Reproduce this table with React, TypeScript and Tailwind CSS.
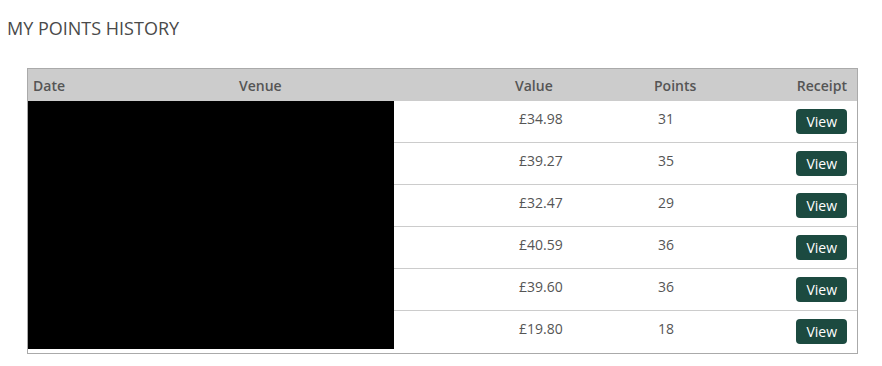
import React from 'react';

const rows = [
  { value: '£34.98', points: 31 },
  { value: '£39.27', points: 35 },
  { value: '£32.47', points: 29 },
  { value: '£40.59', points: 36 },
  { value: '£39.60', points: 36 },
  { value: '£19.80', points: 18 },
];

export default function App() {
  return (
    <div className="min-h-[366px] w-[882px] bg-white font-['Open_Sans',sans-serif] text-[#555]">
      <h1 className="pl-[7px] pt-[16px] text-[18px] leading-[24px] font-normal text-[#4a4a4a]">MY POINTS HISTORY</h1>

      <div className="relative ml-[27px] mt-[28px] w-[831px] border border-[#aaa]">
        {/* header */}
        <div className="grid h-[32px] grid-cols-[211px_276px_139px_1fr_auto] items-center bg-[#ccc] text-[14px] font-semibold text-[#555]">
          <div className="pl-[5px]">Date</div>
          <div>Venue</div>
          <div>Value</div>
          <div>Points</div>
          <div className="pr-[10px]">Receipt</div>
        </div>

        {rows.map((r, i) => (
          <div
            key={i}
            className={
              'grid h-[42px] grid-cols-[211px_276px_143px_1fr_auto] items-start text-[14px] ' +
              (i < rows.length - 1 ? 'border-b border-[#ccc]' : '')
            }
          >
            <div />
            <div />
            <div className="pl-[4px] pt-[7px] leading-[21px]">{r.value}</div>
            <div className="pt-[7px] leading-[21px]">{r.points}</div>
            <div className="pr-[10px] pt-[8px]">
              <button className="h-[25px] rounded-[4px] bg-[#1c4a40] px-[10px] text-[14px] leading-[25px] text-white">
                View
              </button>
            </div>
          </div>
        ))}

        {/* redaction block */}
        <div className="absolute left-0 top-[32px] h-[248px] w-[366px] bg-black" />
      </div>
    </div>
  );
}
